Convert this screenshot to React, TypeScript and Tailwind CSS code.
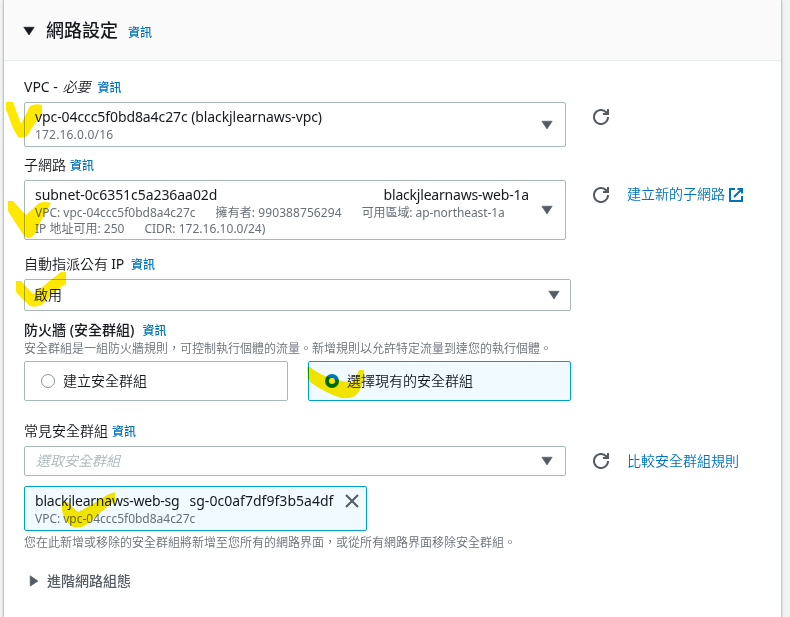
import React from "react";

function Caret({ className = "" }: { className?: string }) {
  return (
    <svg width="12" height="10" viewBox="0 0 12 10" className={"shrink-0 " + className} fill="currentColor">
      <path d="M0.8 1.2h10.4L6 9z" stroke="currentColor" strokeWidth="0.6" strokeLinejoin="round" />
    </svg>
  );
}

function Refresh() {
  return (
    <svg width="16" height="16" viewBox="0 0 16 16" fill="none" stroke="#545b64" strokeWidth="2" className="ml-[27px] shrink-0">
      <path d="M10 5h5V0" />
      <path d="M15 8a7 7 0 1 1-1.9-4.8L15 5" />
      <path d="M12.5 2.5L15 5V2z" fill="#545b64" stroke="none" />
    </svg>
  );
}

function External() {
  return (
    <svg width="14" height="14" viewBox="0 0 14 14" fill="none" stroke="#0073bb" strokeWidth="2" className="ml-1 shrink-0">
      <path d="M6 1H1v12h12V8" />
      <path d="M8.5 1H13v4.5M13 1L5 9" />
    </svg>
  );
}

function Info({ className = "" }: { className?: string }) {
  return <span className={"pt-px text-[12px] font-medium text-[#0073bb] " + className}>資訊</span>;
}

function Label({ children, className = "mb-1" }: { children: React.ReactNode; className?: string }) {
  return <div className={"flex h-[22px] items-center whitespace-pre text-[14px] leading-[22px] " + className}>{children}</div>;
}

export default function App() {
  return (
    <div className="relative h-[617px] w-[790px] overflow-hidden bg-[#f2f3f3] pl-[3px] font-['Noto_Sans','Noto_Sans_CJK_TC',sans-serif] text-[#16191f]">
      <div className="h-full w-[779px] border-x border-[#c4cbcb] bg-white shadow-[0_1px_2px_rgba(0,28,36,0.25)]">
        <header className="flex h-[61px] items-center border-b border-[#eaeded] bg-[#fafafa] pl-[19px]">
          <Caret className="mt-px" />
          <h2 className="ml-[11px] text-[18px] font-medium leading-[22px]">網路設定</h2>
          <Info className="ml-[10px] mt-1" />
        </header>

        <main className="flex flex-col pl-5">
          <Label className="mb-1 mt-[15px]">
            <span>VPC - </span>
            <i className="ml-[1px] font-[350]">必要</i>
            <Info className="ml-[7px]" />
          </Label>
          <div className="flex">
            <div className="flex h-[45px] w-[542px] items-center rounded-[2px] border border-[#aab7b8] pl-[10px] pr-3">
              <div className="flex-1">
                <div className="text-[14px] leading-[17px] tracking-[-0.09px]">vpc-04ccc5f0bd8a4c27c (blackjlearnaws-vpc)</div>
                <div className="-mb-px pt-[2px] text-[12px] leading-4 tracking-[0.18px] text-[#687078]">172.16.0.0/16</div>
              </div>
              <Caret className="text-[#545b64]" />
            </div>
            <div className="flex h-[30px] items-center"><Refresh /></div>
          </div>

          <Label className="mb-1 mt-[7px]">
            <span className="font-[350]">子網路</span>
            <Info className="ml-1" />
          </Label>
          <div className="flex">
            <div className="flex h-[60px] w-[542px] items-center rounded-[2px] border border-[#aab7b8] pl-[10px] pr-3">
              <div className="flex-1">
                <div className="flex w-[494px] justify-between pb-px pt-px text-[14px] leading-[18px]">
                  <span className="tracking-[-0.06px]">subnet-0c6351c5a236aa02d</span>
                  <span className="tracking-[-0.2px]">blackjlearnaws-web-1a</span>
                </div>
                <div className="flex gap-5 whitespace-nowrap text-[12px] leading-4 text-[#687078]">
                  <span className="tracking-[-0.01px]">VPC: vpc-04ccc5f0bd8a4c27c</span>
                  <span className="tracking-[0.08px]">擁有者: 990388756294</span>
                  <span className="tracking-[-0.08px]">可用區域: ap-northeast-1a</span>
                </div>
                <div className="flex gap-5 whitespace-nowrap text-[12px] leading-[15px] text-[#687078]">
                  <span>IP 地址可用: 250</span>
                  <span className="tracking-[0.02px]">CIDR: 172.16.10.0/24)</span>
                </div>
              </div>
              <Caret className="text-[#545b64]" />
            </div>
            <div className="flex h-[30px] items-center">
              <Refresh />
              <a className="ml-[18px] pb-[3px] text-[14px] font-[350] text-[#0073bb]">建立新的子網路</a>
              <External />
            </div>
          </div>

          <Label className="mb-1 mt-[13px]">
            <span className="font-[350]">自動指派公有</span>
            <span className="tracking-[-0.3px]"> IP</span>
            <Info className="ml-[7px]" />
          </Label>
          <div className="flex h-8 w-[547px] items-center justify-between rounded-[2px] border border-[#aab7b8] pl-[9px] pr-[10px]">
            <span className="pb-[2px] text-[14px] font-[350]">啟用</span>
            <Caret className="text-[#545b64]" />
          </div>

          <Label className="mt-2">
            <span className="font-medium">防火牆 (安全群組)</span>
            <Info className="ml-2" />
          </Label>
          <p className="mb-1 h-4 whitespace-nowrap text-[12px] font-[350] leading-4 text-[#687078]">安全群組是一組防火牆規則，可控制執行個體的流量。新增規則以允許特定流量到達您的執行個體。</p>
          <div className="flex gap-5">
            <div className="flex h-10 w-[264px] items-center rounded-[2px] border border-[#aab7b8] pl-4">
              <span className="h-[14px] w-[14px] rounded-full border border-[#879596]" />
              <span className="ml-2 pb-px text-[14px] font-[350]">建立安全群組</span>
            </div>
            <div className="flex h-10 w-[263px] items-center rounded-[2px] border border-[#00a1c9] bg-[#f1faff] pl-4">
              <span className="h-[14px] w-[14px] rounded-full border-4 border-[#0073bb] bg-white" />
              <span className="ml-2 pb-px text-[14px] font-[350]">選擇現有的安全群組</span>
            </div>
          </div>

          <Label className="mb-1 mt-[19px]">
            <span className="font-[350]">常見安全群組</span>
            <Info className="ml-1" />
          </Label>
          <div className="flex">
            <div className="flex h-[30px] w-[542px] items-center justify-between rounded-[2px] border border-[#aab7b8] pl-[11px] pr-3">
              <i className="pb-px text-[14px] font-[350] text-[#aab7b8]">選取安全群組</i>
              <Caret className="text-[#545b64]" />
            </div>
            <div className="flex h-[30px] items-center">
              <Refresh />
              <a className="ml-[18px] pb-px text-[14px] font-[350] text-[#0073bb]">比較安全群組規則</a>
            </div>
          </div>
          <div className="mt-[10px] flex h-[45px] w-[343px] rounded-[2px] border border-[#00a1c9] bg-[#f1faff] pl-[10px] pr-[7px] pt-[5px]">
            <div className="flex-1">
              <div className="flex gap-[10px] whitespace-nowrap pb-px text-[14px] leading-[18px]">
                <span className="tracking-[-0.22px]">blackjlearnaws-web-sg</span>
                <span className="tracking-[0.03px]">sg-0c0af7df9f3b5a4df</span>
              </div>
              <div className="text-[12px] leading-4 tracking-[-0.02px] text-[#687078]">VPC: vpc-04ccc5f0bd8a4c27c</div>
            </div>
            <svg width="14" height="14" viewBox="0 0 14 14" stroke="#545b64" strokeWidth="2" className="mt-[2px] shrink-0">
              <path d="M1 1l12 12M13 1L1 13" />
            </svg>
          </div>
          <p className="mt-1 h-4 whitespace-nowrap text-[12px] font-[350] leading-4 text-[#687078]">您在此新增或移除的安全群組將新增至您所有的網路界面，或從所有網路界面移除安全群組。</p>
          <div className="mt-[19px] flex h-[22px] items-center pl-[4px] text-[#545b64]">
            <Caret className="-rotate-90" />
            <span className="ml-[7px] pb-px text-[14px] font-medium text-[#545b64]">進階網路組態</span>
          </div>
        </main>
      </div>

      <svg className="pointer-events-none absolute left-0 top-0 mix-blend-multiply" width="790" height="617" fill="#ffe800">
        <path d="M6 102H13L21 124L30 106Q36 103 42 105V115L37 120L27 136Q22 139 18 137Q12 128 8 114L6 110Z" />
        <path d="M8 201H13L26 215L39 203Q45 201 51 203L44 215L34 235Q30 240 25 237Q18 227 8 211Z" />
        <path d="M16 281H21L33 294Q44 286 52 279L61 272H66V284Q55 290 43 304Q37 308 30 306Q22 299 16 292Z" />
        <path d="M307 367H310Q318 374 331 378L350 383Q356 380 359 370H364V377Q361 392 355 396Q347 400 338 397Q322 391 310 382L308 378Z" />
        <path d="M62 502H67L78 512Q92 505 107 495L115 492V501Q102 510 89 523Q81 529 73 527Q65 522 62 511Z" />
      </svg>
    </div>
  );
}
